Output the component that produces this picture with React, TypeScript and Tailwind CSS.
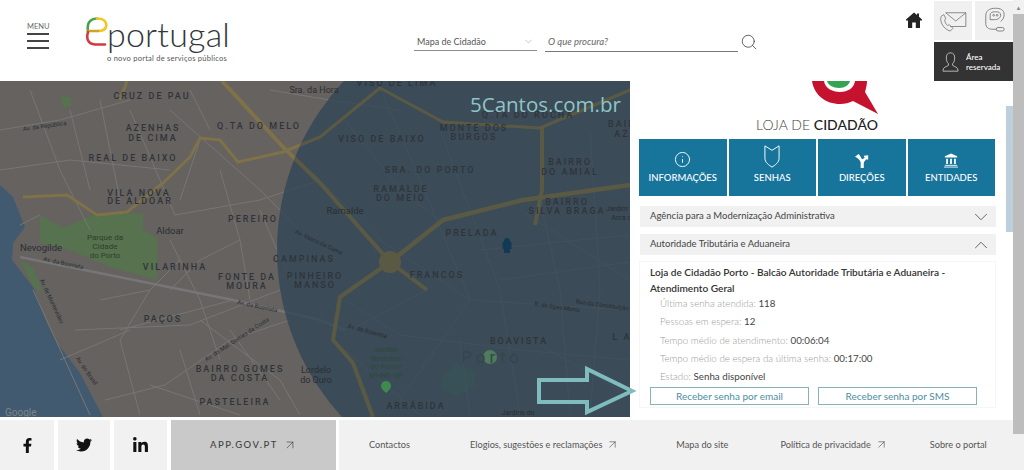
import React from "react";
import { ChevronDown, ChevronUp, Search, ArrowUpRight, Info } from "lucide-react";
import { FaFacebookF, FaTwitter, FaLinkedinIn } from "react-icons/fa";

type L = [string, number, number, number?, number?, string?];
// text, x, y, rotation, size, colour
const caps: L[] = [
  ["CRUZ DE PAU", 152, 96], ["AZENHAS", 153, 128], ["DE CIMA", 153, 138], ["Q.TA DO MELO", 259, 126],
  ["REAL DE BAIXO", 133, 158], ["VILA NOVA", 139, 193], ["DE ALDOAR", 140, 201], ["PEREIRO", 253, 219],
  ["VILARINHA", 175, 267], ["FONTE DA", 247, 277], ["MOURA", 247, 286], ["CAMPINAS", 304, 259],
  ["PINHEIRO", 315, 276], ["MANSO", 315, 285], ["PAÇOS", 163, 319], ["BAIRRO GOMES", 240, 369],
  ["DA COSTA", 240, 378], ["PASTELEIRA", 235, 402], ["VISO DE LIMA", 397, 83], ["Q.TA DO ROCHA", 528, 115],
  ["MONTE DOS", 474, 128], ["BURGOS", 474, 137], ["VISO DE BAIXO", 382, 139], ["SRA. DO PORTO", 430, 170],
  ["RAMALDE", 401, 189], ["DO MEIO", 401, 198], ["BAIRRO", 570, 162], ["DO AMIAL", 570, 172],
  ["BAIRRO", 567, 202], ["SILVA BRAGA", 567, 211], ["BAIR", 622, 124], ["AZ", 622, 134],
  ["PRELADA", 472, 233], ["FRANCOS", 437, 275], ["BOAVISTA", 519, 341], ["ARRÁBIDA", 416, 406], ["L A", 622, 337],
];
const plain: L[] = [
  ["Sra. da Hora", 314, 93, 0, 9], ["Av. da República", 45, 128, -8, 6], ["Aldoar", 170, 234, 0, 9.5],
  ["Parque da", 105, 240, 0, 8, "#2f412b"], ["Cidade", 105, 249, 0, 8, "#2f412b"], ["do Porto", 105, 258, 0, 8, "#2f412b"],
  ["Nevogilde", 41, 251, 0, 9.5], ["Av. da Boavista", 63, 265, 12, 6], ["Av. da Boavista", 257, 308, 12, 6],
  ["Av. da Boavista", 367, 333, 15, 6], ["Av. do Mal. Gomes da Costa", 238, 341, -33, 6], ["Av. de Montevideu", 50, 302, 65, 6],
  ["Av. do Brasil", 85, 372, 55, 6], ["Lordelo", 316, 373, 0, 9], ["do Ouro", 316, 383, 0, 9], ["Ramalde", 345, 214, 0, 9.5],
  ["Jardim", 617, 211, 0, 7], ["Arca d'Água", 630, 220, 0, 7], ["Av. Vasco da Gama", 318, 244, 25, 6],
  ["Rua da Constituição", 602, 307, 8, 6], ["R. de Egas Moniz", 557, 309, 8, 6],
  ["Jardim", 386, 352, 0, 7.5, "#2c4a3a"], ["Botânico", 386, 361, 0, 7.5, "#2c4a3a"], ["do Porto/", 386, 369, 0, 7.5, "#2c4a3a"],
  ["MHNC-UP", 386, 378, 0, 7.5, "#2c4a3a"], ["Jardins do", 518, 415, 0, 7],
];

const thin: string[] = [
  "M0 130 L60 120 L130 100", "M30 90 L60 170 L90 230", "M70 110 L90 190", "M100 100 L120 200", "M130 110 L175 215",
  "M0 170 L70 160 L170 170", "M170 110 L260 190 L300 230", "M190 90 L210 130", "M220 170 L240 240 L250 300",
  "M175 215 L260 200 L320 180", "M150 290 L120 340 L140 415", "M33 290 L90 415", "M120 330 L233 300", "M75 330 L190 325 L280 290",
  "M105 400 L165 385 L230 340 L290 320", "M150 385 L240 415", "M200 320 L280 380 L300 415", "M170 240 L200 300 L220 360",
  "M230 330 L280 400", "M260 210 L290 280", "M340 297 L400 335 L520 350 L629 360", "M310 170 L380 240 L470 300 L629 310",
  "M345 120 L400 190 L440 220", "M380 88 L420 180 L470 300", "M440 130 L500 290 L520 415", "M540 200 L560 290 L570 415",
  "M470 300 L400 400", "M427 290 L350 330", "M480 250 L629 235", "M520 210 L629 280", "M500 280 L629 262", "M590 130 L600 290 L590 415",
  "M460 340 L470 415", "M345 350 L420 415", "M540 345 L629 395", "M180 350 L200 415", "M100 300 L150 290 L180 260",
  "M270 90 L330 100 L400 110", "M20 225 L40 215", "M200 140 L180 200", "M240 240 L200 260 L170 290", "M60 360 L130 330",
];

function Roads({ stroke }: { stroke: string }) {
  return (
    <g fill="none" stroke={stroke} strokeLinejoin="round">
      <path d="M23 197 L67 195 L97 215 L127 212 L163 183 L190 157 L200 138 L220 140 L238 162 L283 152 L320 137 L380 88 L443 122 L540 128 L630 90" strokeWidth="3" />
      <path d="M222 81 L283 147 L320 183 L390 262" strokeWidth="4" />
      <path d="M390 262 L443 220 L523 200 L630 185" strokeWidth="4.5" />
      <path d="M390 262 L340 297 L333 340 L353 363 L373 417" strokeWidth="4" />
      <path d="M390 262 L427 290" strokeWidth="4" />
      <path d="M542 128 L542 190 L535 225" strokeWidth="4" />
      <path d="M127 81 L120 100" strokeWidth="3" />
      <circle cx="390" cy="262" r="11" fill={stroke} stroke="none" />
    </g>
  );
}

function MapView() {
  const label = { fontFamily: "Roboto, sans-serif" };
  return (
    <svg viewBox="0 81 630 336" className="block w-[630px] h-[336px] shrink-0 bg-[#656260]">
      <defs>
        <clipPath id="zone"><circle cx="524" cy="250" r="247" /></clipPath>
      </defs>
      <path d="M0 185 L13 197 L25 227 L13 243 L12 260 L33 287 L47 323 L57 343 L80 373 L103 417 L0 417Z" fill="#415a70" />
      <path d="M40 215 L63 228 L93 215 L143 213 L143 230 L157 237 L157 280 L110 267 L70 250 L40 243Z" fill="#56724f" />
      <path d="M20 260 L33 267 L43 293 L33 287Z" fill="#56724f" />
      <path d="M60 97 L70 96 L72 106 L64 108Z" fill="#56724f" />
      <path d="M441 378 L457 364 L475 372 L475 385 L457 396 L443 390Z" fill="#56785a" />
      <path d={thin.join(" ")} fill="none" stroke="#787674" strokeWidth="1" />
      <path d="M20 257 L233 300 L320 320 L345 330" fill="none" stroke="#777677" strokeWidth="2.5" />
      <Roads stroke="#7f7148" />
      <circle cx="524" cy="250" r="247" fill="#2b4354" fillOpacity="0.72" />
      <g clipPath="url(#zone)"><Roads stroke="#5a5a44" /></g>
      <circle cx="490" cy="357" r="7" fill="#4f7c5c" />
      <g style={label} fontSize="9" fontWeight="500" letterSpacing="2" textAnchor="middle" fill="#30343a">
        {caps.map(([t, x, y], i) => (
          <text key={i} x={x} y={y + 3}>{t}</text>
        ))}
      </g>
      <g style={label} textAnchor="middle" fill="#2a2e32">
        {plain.map(([t, x, y, r, s, c], i) => (
          <text key={i} x={x} y={y} fontSize={s} fill={c} transform={r ? `rotate(${r} ${x} ${y})` : undefined}>{t}</text>
        ))}
      </g>
      <text x="492" y="363" style={label} fontSize="17" letterSpacing="4" textAnchor="middle" fill="#35454f">Porto</text>
      <text x="5" y="416" style={label} fontSize="10" fill="#7c8488">Google</text>
      <path d="M386 381 a5 5 0 0 1 5 5 q0 3 -5 7 q-5 -4 -5 -7 a5 5 0 0 1 5 -5Z" fill="#3f8a4f" />
      <path d="M507 238 a3 3 0 0 1 3 3 l1.500 2 v6 h-1.500 v4 h-6 v-4 h-1.500 v-6 l1.500 -2 a3 3 0 0 1 3 -3Z" fill="#123a55" />
    </svg>
  );
}

function HomeIcon() {
  return (
    <svg viewBox="0 0 16 16" className="w-[16px] h-[16px]" fill="#222">
      <path d="M8 0.500 L11 3 V1.500 H13 V4.700 L16 7.500 V8.500 H14 V16 H9.800 V10.500 H6.200 V16 H2 V8.500 H0 V7.500Z" />
    </svg>
  );
}
function MailIcon() {
  return (
    <svg viewBox="0 0 30 24" className="w-[28px] h-[22px]" fill="none" stroke="#777" strokeWidth="0.9">
      <path d="M7 3 H29 V18 H12" />
      <path d="M7 3 L18 12 L29 3" />
      <path d="M2 7 C0 13 5 21 12 23 L15 20 L11 16 L9 17 C7 15 6 13 6 11 L7 9 L5 5Z" />
    </svg>
  );
}
function EIcon() {
  return (
    <svg viewBox="0 0 24 30" className="w-[21px] h-[27px]" fill="none" stroke="#777" strokeWidth="1">
      <path d="M19 16 C22 14 23 11 23 8 C23 3 19 1 13 1 C6 1 2 4 2 10 V18 C2 23 5 25 10 25 H14" />
      <path d="M7 14 V9 C7 6 9 5 13 5 C17 5 19 6 19 9 C19 12 16 14 12 14Z" />
      <rect x="14" y="23" width="9" height="4" rx="2" />
      <circle cx="11" cy="9" r="1" />
      <circle cx="15" cy="9" r="1" />
    </svg>
  );
}
function UserIcon() {
  return (
    <svg viewBox="0 0 20 24" className="w-[17px] h-[20px]" fill="none" stroke="#cfcfcf" strokeWidth="1">
      <path d="M10 1 C6 1 5 4 5 7 C5 10 6 13 7.500 14 V16 C5 18 1 18 1 22 V23 H19 V22 C19 18 15 18 12.500 16 V14 C14 13 15 10 15 7 C15 4 14 1 10 1Z" />
    </svg>
  );
}
function ShieldIcon() {
  return (
    <svg viewBox="0 0 20 26" className="w-[18px] h-[23px]" fill="none" stroke="#fff" strokeWidth="1.100">
      <path d="M2 1 L10 6 L18 1 V15 C18 20 13 23 10 25 C7 23 2 20 2 15Z" />
    </svg>
  );
}
function SplitIcon() {
  return (
    <svg viewBox="0 0 16 16" className="w-[14px] h-[14px]" fill="#fff">
      <path d="M0 3 L4 0 C6 2 7 4 8 6 C9 6 10 5 11 4 L10 2 L15 1.500 L15 6.500 L13 6 C11 8 10 9 10 11 V16 H6.500 V10 C6 7 4 5 0 3Z" />
    </svg>
  );
}
function BankIcon() {
  return (
    <svg viewBox="0 0 16 16" className="w-[14px] h-[15px]" fill="#fff">
      <path d="M8 0 L15 3 V4.500 H1 V3Z" />
      <rect x="2.500" y="6" width="2" height="6" />
      <rect x="7" y="6" width="2" height="6" />
      <rect x="11.500" y="6" width="2" height="6" />
      <rect x="1" y="13" width="14" height="1" />
      <rect x="0" y="15" width="16" height="1" />
    </svg>
  );
}
function LojaLogo() {
  return (
    <svg viewBox="0 0 70 33" className="block w-[70px] h-[33px] self-start ml-[171px] shrink-0">
      <path d="M2 0 C4 14 16 23 30 23 C35 23 39 22 43 20 L68 33 L55 11 C56 7 57 4 57 0 H45 C44 7 38 11 30 11 C22 11 15 7 14 0Z" fill="#c4122f" />
      <path d="M17 0 C18 4 23 7 29 7 C35 7 39 4 40 0Z" fill="#36a352" />
    </svg>
  );
}

function Tile({ icon, label }: { icon: React.ReactNode; label: string }) {
  return (
    <div className="flex-1 h-[57px] bg-[#17749b] flex flex-col items-center justify-end pb-[12px] text-white text-[9.500px] leading-[13px] font-medium">
      <div className="h-[26px] flex items-end justify-center pb-[3px]">{icon}</div>
      {label}
    </div>
  );
}
function Acc({ label, open }: { label: string; open?: boolean }) {
  return (
    <div className="h-[21px] bg-[#f1f1f1] pl-[10px] pr-[4px] flex items-center justify-between text-[9.500px] text-[#444]">
      {label}
      {open ? <ChevronUp size={22} strokeWidth={0.8} color="#333" /> : <ChevronDown size={22} strokeWidth={0.8} color="#333" />}
    </div>
  );
}
function Row({ k, v }: { k: string; v: string }) {
  return (
    <div className="h-[18.300px] leading-[18.300px] pl-[10px] text-[9.750px] text-[#9a9a9a] font-light">
      {k}: <span className="text-[#444] font-normal">{v}</span>
    </div>
  );
}
function Btn({ label }: { label: string }) {
  return (
    <div className="w-[159px] h-[18px] border border-[#84b3b8] text-[#4d8ea0] text-[10px] flex items-center justify-center">{label}</div>
  );
}
function FootLink({ label, ext, className }: { label: string; ext?: boolean; className?: string }) {
  return (
    <div className={`flex items-center gap-[4px] text-[9.200px] text-[#555] ${className ?? ""}`}>
      {label}
      {ext && <ArrowUpRight size={13} strokeWidth={1} color="#333" />}
    </div>
  );
}

export default function App() {
  return (
    <div className="flex w-[1024px] h-[470px] overflow-hidden bg-white font-['Lato',sans-serif]">
      <div className="w-[1013px] shrink-0 flex flex-col">
        <header className="h-[81px] shrink-0 flex">
          <div className="ml-[27px] w-[22px] shrink-0 pt-[22px]">
            <div className="text-[7.500px] leading-[9px] text-[#666] text-center">MENU</div>
            <div className="mt-[2px] flex flex-col gap-[5px]">
              <div className="h-[2px] bg-[#444]" />
              <div className="h-[2px] bg-[#444]" />
              <div className="h-[2px] bg-[#444]" />
            </div>
          </div>
          <div className="ml-[36px] w-[146px] shrink-0 pt-[15px]">
            <div className="flex items-start h-[38px]">
              <svg viewBox="0 0 23 30" className="w-[23px] h-[30px] mt-[2px] shrink-0" fill="none" strokeWidth="2.600" strokeLinecap="round">
                <path d="M3 15 C2 8 3 2 12 1.500" stroke="#48a14d" />
                <path d="M12 1.500 C20 1.500 22 6 21 10 C20 13 17 14 13 14" stroke="#efc62b" />
                <path d="M13 14 H3" stroke="#c9a52a" />
                <path d="M3 15 C1 22 3 27 10 27.500 H20" stroke="#d23a3f" />
              </svg>
              <div className="text-[34px] leading-[38px] font-light text-[#33373b] -ml-[1px] tracking-[0.2px]">portugal</div>
            </div>
            <div className="text-[7.500px] leading-[9px] text-[#555] ml-[22px] mt-[1px] whitespace-nowrap tracking-[0.25px]">o novo portal de serviços públicos</div>
          </div>
          <div className="ml-[183px] w-[123px] shrink-0 pt-[33px]">
            <div className="h-[18px] border-b border-[#8c8c8c] pl-[3px] pr-[3px] flex items-center justify-between text-[9px] text-[#555]">
              Mapa de Cidadão
              <ChevronDown size={11} strokeWidth={1} color="#888" />
            </div>
          </div>
          <div className="ml-[8px] w-[193px] shrink-0 pt-[33px]">
            <div className="h-[19px] border-b border-[#777] pl-[3px] flex items-center text-[9.500px] italic text-[#666]">O que procura?</div>
          </div>
          <div className="pt-[33px] ml-[2px] w-[18px] shrink-0">
            <Search size={18} strokeWidth={1} color="#333" />
          </div>
          <div className="ml-auto pt-[12px] mr-[12px] shrink-0">
            <HomeIcon />
          </div>
          <div className="w-[79px] shrink-0 flex flex-col">
            <div className="flex justify-between pt-[1px]">
              <div className="w-[38px] h-[39px] bg-[#f0f0f0] flex items-center justify-center"><MailIcon /></div>
              <div className="w-[38px] h-[39px] bg-[#f0f0f0] flex items-center justify-center"><EIcon /></div>
            </div>
            <div className="mt-[2px] h-[39px] bg-[#333] flex items-center pl-[8px] gap-[7px]">
              <UserIcon />
              <div className="text-[8px] leading-[10px] text-white font-medium">Área<br />reservada</div>
            </div>
          </div>
        </header>

        <main className="h-[336px] shrink-0 flex relative">
          <MapView />
          <div className="flex-1 flex">
            <div className="w-[376px] shrink-0 pl-[9px] pr-[1px]">
              <div className="w-[356px] h-[58px] flex flex-col items-center">
                <LojaLogo />
                <div className="text-[14px] leading-[19px] mt-[1px] text-[#444] font-light whitespace-nowrap">LOJA DE <span className="font-medium text-[#222]">CIDADÃO</span></div>
              </div>
              <div className="flex gap-[2px] w-[356px]">
                <Tile icon={<Info size={17} strokeWidth={1.300} />} label="INFORMAÇÕES" />
                <Tile icon={<ShieldIcon />} label="SENHAS" />
                <Tile icon={<SplitIcon />} label="DIREÇÕES" />
                <Tile icon={<BankIcon />} label="ENTIDADES" />
              </div>
              <div className="mt-[10px] ml-[1px] flex flex-col gap-[7px] w-[356px]">
                <Acc label="Agência para a Modernização Administrativa" />
                <Acc label="Autoridade Tributária e Aduaneira" open />
              </div>
              <div className="mt-[6px] w-[357px] h-[147px] border border-[#f6f6f6] pl-[10px] pt-[3px]">
                <div className="text-[10.100px] leading-[15.500px] font-semibold text-[#333] w-[320px] mb-[-2px]">Loja de Cidadão Porto - Balcão Autoridade Tributária e Aduaneira - Atendimento Geral</div>
                <Row k="Última senha atendida" v="118" />
                <Row k="Pessoas em espera" v="12" />
                <Row k="Tempo médio de atendimento" v="00:06:04" />
                <Row k="Tempo médio de espera da última senha" v="00:17:00" />
                <Row k="Estado" v="Senha disponível" />
                <div className="flex gap-[9px] mt-[2px]">
                  <Btn label="Receber senha por email" />
                  <Btn label="Receber senha por SMS" />
                </div>
              </div>
            </div>
            <div className="w-[7px] shrink-0 pt-[25px]">
              <div className="h-[126px] bg-[#bccfda]" />
            </div>
          </div>
          <svg viewBox="0 0 104 52" className="absolute left-[534px] top-[284px] w-[104px] h-[52px]" fill="none" stroke="#7fbcbd" strokeWidth="4">
            <path d="M5 15 H53 V4 L98 26 L53 47 V37 H5Z" />
          </svg>
          <div className="absolute left-[470px] top-[10px] text-[20.500px] leading-[26px] text-[#8fc5c6] font-['Open_Sans',sans-serif] whitespace-nowrap">5Cantos.com.br</div>
        </main>

        <footer className="mt-[3px] h-[50px] shrink-0 flex">
          <div className="w-[54px] bg-[#f1f1f1] flex items-center justify-center"><FaFacebookF size={15} color="#111" /></div>
          <div className="ml-[4px] w-[52px] bg-[#f1f1f1] flex items-center justify-center"><FaTwitter size={16} color="#111" /></div>
          <div className="ml-[4px] w-[53px] bg-[#f1f1f1] flex items-center justify-center"><FaLinkedinIn size={17} color="#111" /></div>
          <div className="ml-[4px] w-[165px] bg-[#c9c9c9] flex items-center justify-center gap-[5px] text-[9.500px] tracking-[1.500px] font-medium text-[#444]">
            APP.GOV.PT <ArrowUpRight size={14} strokeWidth={1} color="#333" />
          </div>
          <div className="ml-[3px] flex-1 bg-[#f1f1f1] flex items-center pl-[30px]">
            <FootLink label="Contactos" />
            <FootLink label="Elogios, sugestões e reclamações" ext className="ml-[60px]" />
            <FootLink label="Mapa do site" className="ml-[57px]" />
            <FootLink label="Política de privacidade" ext className="ml-[52px]" />
            <FootLink label="Sobre o portal" className="ml-[42px]" />
          </div>
        </footer>
      </div>
      <div className="w-[11px] shrink-0 bg-[#f1f1f1] flex flex-col">
        <div className="h-[14px] flex items-center justify-center text-[6px] text-[#888]">▲</div>
        <div className="h-[420px] bg-[#bdbdbd]" />
      </div>
    </div>
  );
}
